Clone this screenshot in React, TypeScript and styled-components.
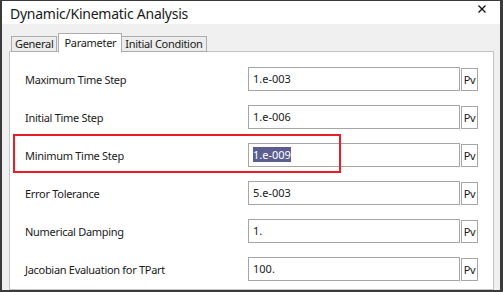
import React from 'react'
import styled, { createGlobalStyle } from 'styled-components'

const GlobalStyle = createGlobalStyle`
  html, body {
    margin: 0;
    padding: 0;
    background: #ffffff;
  }
  * {
    box-sizing: border-box;
  }
`

const Window = styled.div`
  width: 503px;
  height: 292px;
  border-style: solid;
  border-color: #3a3a3a;
  border-width: 1px 3px 2px 2px;
  display: flex;
  flex-direction: column;
  overflow: hidden;
  font-family: 'Noto Sans', 'Open Sans', sans-serif;
  color: #1a1a1a;
`

const TitleBar = styled.div`
  height: 23px;
  flex: none;
  background: #ffffff;
  display: flex;
  align-items: center;
  justify-content: space-between;
  padding: 0 14px 0 8px;
  .title {
    font-size: 14px;
    letter-spacing: -0.25px;
    margin-top: 1px;
  }
  svg {
    align-self: flex-start;
    margin-top: 4px;
  }
`

const Body = styled.div`
  flex: 1;
  background: #f0f0f0;
  padding: 9px 6px 0 7px;
  display: flex;
  flex-direction: column;
`

const TabRow = styled.div`
  display: flex;
  align-items: flex-end;
  padding-left: 2px;
  position: relative;
  z-index: 1;
`

const Tab = styled.div<{ $active?: boolean }>`
  font-size: 11px;
  letter-spacing: -0.3px;
  line-height: 14px;
  padding: ${(p) => (p.$active ? '2px 5px 3px 5px' : '0 3px 0 3px')};
  height: ${(p) => (p.$active ? '20px' : '16px')};
  border: 1px solid #acacac;
  border-bottom: ${(p) => (p.$active ? '1px solid #ffffff' : '1px solid #acacac')};
  background: ${(p) => (p.$active ? '#ffffff' : '#ececec')};
  margin: ${(p) => (p.$active ? '0 -1px -1px 1px' : '0')};
  position: relative;
  z-index: ${(p) => (p.$active ? 2 : 1)};
  white-space: nowrap;
`

const Panel = styled.div`
  flex: 1;
  background: #ffffff;
  border: 1px solid #c4c4c4;
  margin-top: -1px;
  padding: 15px 0 0 15px;
  display: flex;
  flex-direction: column;
  gap: 14px;
  position: relative;
`

const Row = styled.div`
  display: grid;
  grid-template-columns: 222px 212px 17px;
  column-gap: 1px;
  align-items: center;
  height: 24px;
`

const Label = styled.span`
  font-size: 11px;
  letter-spacing: -0.3px;
  padding-top: 1px;
`

const Field = styled.div`
  height: 24px;
  border: 1px solid #a6a6a6;
  background: #ffffff;
  font-size: 11px;
  line-height: 14px;
  padding: 4px 4px 0 4px;
`

const Selected = styled.span`
  background: #5c5e92;
  color: #ffffff;
`

const PvButton = styled.div`
  height: 23px;
  border: 1px solid #a6a6a6;
  background: #ffffff;
  font-size: 11px;
  display: flex;
  align-items: center;
  justify-content: center;
  letter-spacing: -0.3px;
`

const Highlight = styled.div`
  position: absolute;
  left: 3px;
  top: 82px;
  width: 328px;
  height: 39px;
  border: 2px solid #ec1c24;
  pointer-events: none;
`

const rows = [
  { label: 'Maximum Time Step', value: '1.e-003' },
  { label: 'Initial Time Step', value: '1.e-006' },
  { label: 'Minimum Time Step', value: '1.e-009', selected: true },
  { label: 'Error Tolerance', value: '5.e-003' },
  { label: 'Numerical Damping', value: '1.' },
  { label: 'Jacobian Evaluation for TPart', value: '100.' },
]

const App: React.FC = () => {
  return (
    <>
      <GlobalStyle />
      <Window>
        <TitleBar>
          <span className="title">Dynamic/Kinematic Analysis</span>
          <svg width="8" height="8" viewBox="0 0 8 8">
            <path d="M0.5 0.5 L7.5 7.5 M7.5 0.5 L0.5 7.5" stroke="#111" strokeWidth="1.3" />
          </svg>
        </TitleBar>
        <Body>
          <TabRow>
            <Tab>General</Tab>
            <Tab $active>Parameter</Tab>
            <Tab>Initial Condition</Tab>
          </TabRow>
          <Panel>
            {rows.map((row) => (
              <Row key={row.label}>
                <Label>{row.label}</Label>
                <Field>{row.selected ? <Selected>{row.value}</Selected> : row.value}</Field>
                <PvButton>Pv</PvButton>
              </Row>
            ))}
            <Highlight />
          </Panel>
        </Body>
      </Window>
    </>
  )
}

export default App
